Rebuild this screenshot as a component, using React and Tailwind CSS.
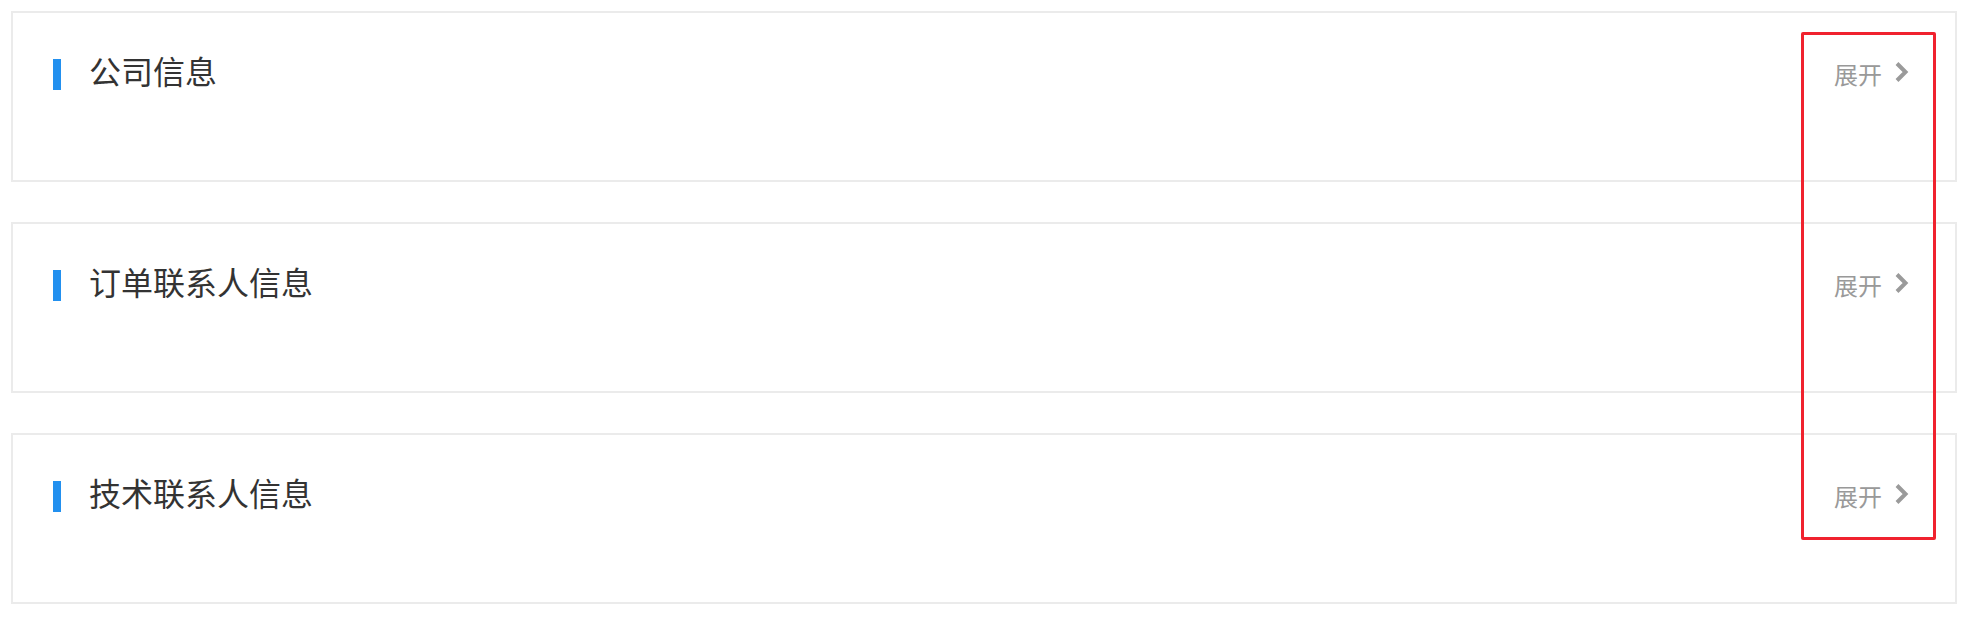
import React from 'react';

const sections = ['公司信息', '订单联系人信息', '技术联系人信息'];

function Chevron() {
  return (
    <svg width="14" height="20" viewBox="0 0 14 20" fill="none" className="block">
      <path d="M2 1.5 L10.5 10 L2 18.5" stroke="#9a9a9a" strokeWidth="4" strokeLinejoin="miter" />
    </svg>
  );
}

function SectionCard({ title, first }) {
  return (
    <div
      className={
        'box-border h-[171px] border-2 border-[#ebebeb] bg-white pt-[41px] pl-10 pr-[46px] ' +
        (first ? '' : 'mt-10')
      }
    >
      <div className="flex items-start">
        <span className="mt-[5px] block h-[31px] w-2 bg-[#2290ef]" />
        <span className="ml-7 text-[32px] leading-8 text-[#333333]">{title}</span>
        <div className="ml-auto flex items-start">
          <span className="mt-[8px] text-[24px] leading-6 text-[#999999]">展开</span>
          <span className="ml-[13px] mt-2">
            <Chevron />
          </span>
        </div>
      </div>
    </div>
  );
}

export default function App() {
  return (
    <div
      className="relative min-h-[618px] w-[1978px] bg-white pt-[11px] pl-[11px] pr-[21px]"
      style={{ fontFamily: '"Noto Sans CJK SC", "Noto Sans", sans-serif' }}
    >
      {sections.map((s, i) => (
        <SectionCard key={s} title={s} first={i === 0} />
      ))}
      {/* 标注框 */}
      <div className="pointer-events-none absolute left-[1801px] top-8 h-[508px] w-[135px] rounded-[2px] border-[3px] border-[#f0222e]" />
    </div>
  );
}
